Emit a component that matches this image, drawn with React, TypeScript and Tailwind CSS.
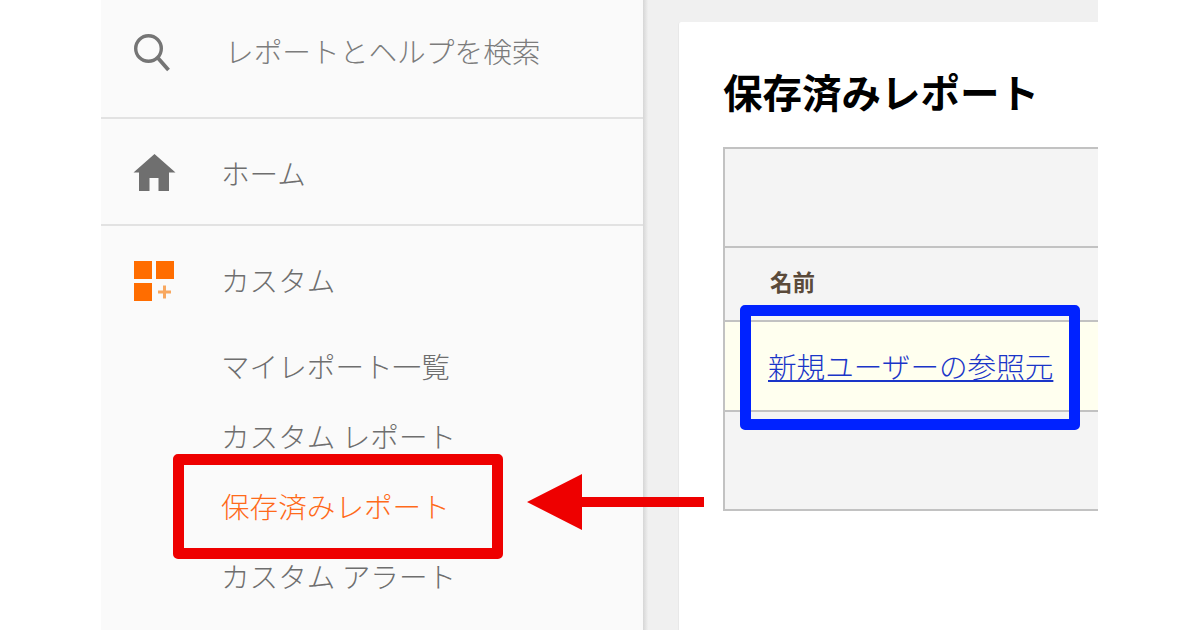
const JP = "font-['Noto_Sans_CJK_JP','Noto_Sans_CJK_SC',sans-serif]";

function SearchIcon() {
  return (
    <svg width="40" height="40" viewBox="0 0 40 40" className="shrink-0 mt-[4px]">
      <circle cx="17.5" cy="15.5" r="12.8" fill="none" stroke="#757575" strokeWidth="3.4" />
      <path d="M26.5 24.5 L37.5 37" stroke="#757575" strokeWidth="3.8" fill="none" />
    </svg>
  );
}

function HomeIcon() {
  return (
    <svg width="44" height="38" viewBox="0 0 44 38" className="shrink-0">
      <path d="M21.5 0 L42.5 18.5 L36 18.5 L36 37 L25.5 37 L25.5 24 L16.5 24 L16.5 37 L6 37 L6 18.5 L0.5 18.5 Z" fill="#6f6f6f" />
    </svg>
  );
}

function CustomIcon() {
  return (
    <svg width="40" height="40" viewBox="0 0 40 40" className="shrink-0 mt-[2px]">
      <rect x="0" y="0" width="18" height="18" fill="#ff6d00" />
      <rect x="22" y="0" width="18" height="18" fill="#ff6d00" />
      <rect x="0" y="22" width="18" height="18" fill="#ff6d00" />
      <path d="M24 31 H37 M30.5 24.5 V37.5" stroke="#f8a860" strokeWidth="3" />
    </svg>
  );
}

function SubItem({ label, active }: { label: string; active?: boolean }) {
  return (
    <div className={`h-[70px] flex items-center text-[28.6px] font-light ${active ? "text-[#ff6a1a]" : "text-[#6e6e6e]"}`}>
      {label}
    </div>
  );
}

export default function App() {
  return (
    <div className={`relative w-[1200px] h-[630px] overflow-hidden bg-white flex ${JP}`}>
      <div className="w-[101px] shrink-0 bg-white" />

      <aside className="w-[542px] shrink-0 bg-[#fafafa] flex flex-col">
        <div className="h-[119px] shrink-0 border-b-2 border-[#e2e2e2] flex items-center pl-[30px] gap-[54px] pb-[16px]">
          <SearchIcon />
          <span className="text-[28.7px] font-light text-[#7c7c7c]">レポートとヘルプを検索</span>
        </div>
        <div className="h-[107px] shrink-0 border-b-2 border-[#e2e2e2] flex items-center pl-[32px] gap-[44px] pt-[3px]">
          <HomeIcon />
          <span className="text-[28.6px] font-light text-[#6e6e6e]">ホーム</span>
        </div>
        <div className="h-[105px] shrink-0 flex items-center pl-[33px] gap-[47px] pt-[3px]">
          <CustomIcon />
          <span className="text-[28.6px] font-light text-[#6e6e6e]">カスタム</span>
        </div>
        <div className="pl-[120px] flex flex-col">
          <SubItem label="マイレポート一覧" />
          <SubItem label="カスタム レポート" />
          <SubItem label="保存済みレポート" active />
          <SubItem label="カスタム アラート" />
        </div>
      </aside>
      <div className="w-[5px] shrink-0 bg-gradient-to-r from-[#d6d6d6] to-[#efefef]" />

      <main className="w-[450px] shrink-0 bg-[#f0f0f0] pl-[30px] pt-[22px]">
        <div className="h-[620px] bg-white rounded-tl-[3px] border-l border-[#e8e8e8] pl-[44px] pt-[42px]">
          <h1 className="text-[39.5px] font-bold text-black leading-[54px] h-[83px]">保存済みレポート</h1>
          <div className="border-2 border-r-0 border-[#c2c2c2] bg-[#f4f4f4] h-[364px] flex flex-col">
            <div className="h-[99px] shrink-0 border-b-2 border-[#c2c2c2]" />
            <div className="h-[74px] shrink-0 border-b-2 border-[#c2c2c2] flex items-end pl-[45px] pb-[23px]">
              <span className="text-[22.5px] font-bold text-[#5a4a3a] leading-[32px]">名前</span>
            </div>
            <div className="h-[90px] shrink-0 border-b-2 border-[#c2c2c2] bg-[#ffffef] flex items-center pl-[43px]">
              <a className="text-[28.6px] font-light leading-[36px] text-[#1a35c8] underline">新規ユーザーの参照元</a>
            </div>
          </div>
        </div>
      </main>

      <div className="flex-1 bg-white" />

      {/* annotations */}
      <div className="absolute left-[173px] top-[454px] w-[330px] h-[105px] border-[11px] border-[#ee0000] rounded-[5px]" />
      <div className="absolute left-[740px] top-[305px] w-[340px] h-[125px] border-[11px] border-[#0022ff] rounded-[5px]" />
      <svg className="absolute left-[527px] top-[474px]" width="177" height="56" viewBox="0 0 177 56">
        <path d="M0 28 L55 0 L55 23 L177 23 L177 33 L55 33 L55 56 Z" fill="#ee0000" />
      </svg>
    </div>
  );
}
